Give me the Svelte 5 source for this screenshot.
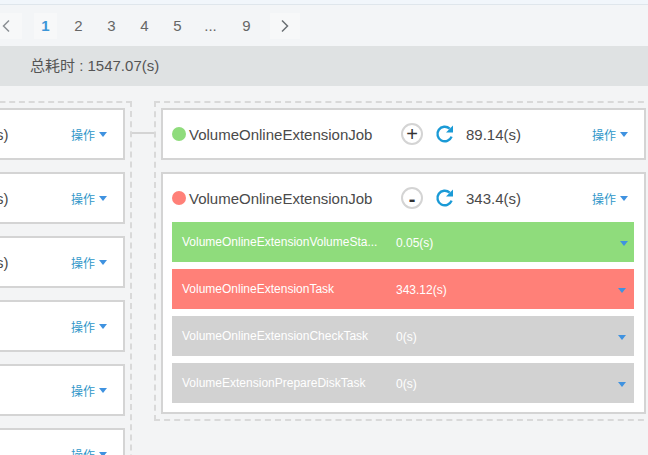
<script>
  const pages = ["1", "2", "3", "4", "5", "...", "9"];
  const leftRows = ["s)", "s)", "s)", "", "", ""];
  const tasks = [
    { name: "VolumeOnlineExtensionVolumeSta...", time: "0.05(s)", state: "ok" },
    { name: "VolumeOnlineExtensionTask", time: "343.12(s)", state: "bad" },
    { name: "VolumeOnlineExtensionCheckTask", time: "0(s)", state: "idle" },
    { name: "VolumeExtensionPrepareDiskTask", time: "0(s)", state: "idle" }
  ];
</script>

{#snippet refresh()}
  <svg class="refresh" width="20" height="20" viewBox="0 0 20 20">
    <path d="M16.6 12.6a7.3 7.3 0 1 1-1.9-8" fill="none" stroke="#1a9ad6" stroke-width="2.4" />
    <path d="M18 1.6v7h-7z" fill="#1a9ad6" />
  </svg>
{/snippet}

{#snippet action()}
  <span class="action">操作<i class="caret"></i></span>
{/snippet}

<div class="page">
  <div class="topline"></div>
  <div class="pager">
    <span class="pbtn prev">
      <svg width="10" height="14" viewBox="0 0 10 14"><path d="M8 1.5 2.5 7 8 12.5" fill="none" stroke="#8a8f94" stroke-width="1.5" /></svg>
    </span>
    {#each pages as p, i}
      <span class="pbtn" class:active={i === 0} class:last={i === pages.length - 1}>{p}</span>
    {/each}
    <span class="pbtn next">
      <svg width="10" height="14" viewBox="0 0 10 14"><path d="M2 1.5 7.5 7 2 12.5" fill="none" stroke="#6a6f74" stroke-width="1.5" /></svg>
    </span>
  </div>
  <div class="summary">总耗时 : 1547.07(s)</div>

  <div class="flow">
    <div class="stage left">
      {#each leftRows as row}
        <div class="card lcard">
          <span class="ltime">{row}</span>
          {@render action()}
        </div>
      {/each}
    </div>
    <div class="link"></div>
    <div class="stage right">
      <div class="card job">
        <div class="jobhead">
          <span class="dot green"></span>
          <span class="jobname">VolumeOnlineExtensionJob</span>
          <span class="toggle">+</span>
          {@render refresh()}
          <span class="jobtime">89.14(s)</span>
          {@render action()}
        </div>
      </div>
      <div class="card job">
        <div class="jobhead">
          <span class="dot red"></span>
          <span class="jobname">VolumeOnlineExtensionJob</span>
          <span class="toggle minus">-</span>
          {@render refresh()}
          <span class="jobtime">343.4(s)</span>
          {@render action()}
        </div>
        <div class="tasks">
          {#each tasks as t}
            <div class="task {t.state}">
              <span class="tname">{t.name}</span>
              <span class="ttime">{t.time}</span>
              <i class="caret"></i>
            </div>
          {/each}
        </div>
      </div>
    </div>
  </div>
</div>

<style>
  :global(body) {
    margin: 0;
    background: #f3f4f5;
    overflow: hidden;
  }
  .page {
    width: 648px;
    height: 455px;
    overflow: hidden;
    font-family: "Liberation Sans", "Noto Sans CJK SC", sans-serif;
    color: #4a4a4a;
  }
  .topline {
    height: 4px;
    background: #f1f6fb;
    border-bottom: 1px solid #dfe6ec;
  }
  .pager {
    height: 41px;
    display: flex;
    align-items: center;
    background: #f3f5f7;
    margin-left: -10px;
    font-size: 15px;
    color: #666;
  }
  .pbtn {
    width: 23px;
    height: 26px;
    margin: 0 5px;
    display: flex;
    align-items: center;
    justify-content: center;
  }
  .prev {
    width: 32px;
    margin: 0 7px 0 0;
    background: #f7f8f9;
  }
  .next {
    width: 30px;
    margin: 0 0 0 7px;
    background: #f7f8f9;
  }
  .last {
    margin-left: 8px;
  }
  .active {
    color: #3c96d8;
    font-weight: bold;
    background: #f7f8f9;
  }
  .summary {
    height: 40px;
    line-height: 40px;
    padding-left: 30px;
    background: #dfe2e3;
    font-size: 15px;
    color: #555;
  }
  .flow {
    display: flex;
    align-items: flex-start;
    margin-top: 15px;
    width: 700px;
  }
  .stage {
    border: 2px dashed #d9d9d9;
    padding: 5px;
    display: flex;
    flex-direction: column;
    gap: 12px;
    box-sizing: border-box;
  }
  .left {
    width: 152px;
    margin-left: -20px;
    flex: none;
    height: 400px;
    border-left: none;
    border-bottom: none;
  }
  .link {
    width: 22px;
    height: 2px;
    margin-top: 31px;
    background: #d4d4d4;
    flex: none;
  }
  .right {
    width: 500px;
    flex: none;
  }
  .card {
    background: #fff;
    border: 2px solid #d4d4d4;
    box-sizing: border-box;
  }
  .lcard {
    height: 52px;
    flex: none;
    display: flex;
    align-items: center;
    padding-right: 16px;
    font-size: 15px;
  }
  .ltime {
    margin-left: 9px;
    flex: 1;
  }
  .job {
    width: 485px;
  }
  .jobhead {
    height: 48px;
    display: flex;
    align-items: center;
    padding: 0 15px 0 9px;
  }
  .dot {
    width: 14px;
    height: 14px;
    border-radius: 50%;
    margin-right: 3px;
  }
  .green {
    background: #8fdc7c;
  }
  .red {
    background: #ff8078;
  }
  .jobname {
    width: 212px;
    font-size: 15px;
  }
  .toggle {
    width: 22px;
    height: 22px;
    box-sizing: border-box;
    border: 2px solid #d4d4d4;
    border-radius: 50%;
    display: flex;
    align-items: center;
    justify-content: center;
    font-size: 20px;
    color: #333;
  }
  .minus {
    font-size: 20px;
    font-weight: bold;
    padding-top: 2px;
  }
  .refresh {
    margin-left: 12px;
  }
  .jobtime {
    margin-left: 11px;
    width: 126px;
    font-size: 15px;
  }
  .action {
    font-size: 12px;
    color: #2f97c9;
    display: flex;
    align-items: center;
    white-space: nowrap;
  }
  .caret {
    display: inline-block;
    width: 0;
    height: 0;
    margin-left: 4px;
    border-left: 4px solid transparent;
    border-right: 4px solid transparent;
    border-top: 5px solid #3f92e0;
  }
  .tasks {
    padding: 0 10px 9px 9px;
    display: flex;
    flex-direction: column;
    gap: 7px;
  }
  .task {
    height: 40px;
    box-sizing: border-box;
    display: flex;
    align-items: center;
    padding: 2px 8px 0 10px;
    font-size: 12px;
    color: #fff;
  }
  .tname {
    width: 214px;
    margin-top: -2px;
    white-space: nowrap;
  }
  .ttime {
    flex: 1;
  }
  .ok {
    background: #8fdc7c;
    padding-right: 6px;
  }
  .bad {
    background: #ff8078;
  }
  .idle {
    background: #d2d2d2;
  }
</style>
